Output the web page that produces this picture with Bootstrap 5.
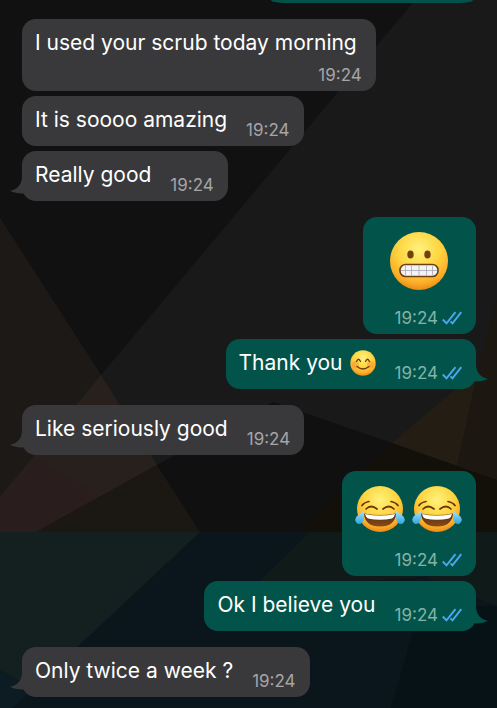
<!DOCTYPE html>
<html lang="en">
<head>
<meta charset="utf-8">
<meta name="viewport" content="width=device-width, initial-scale=1">
<title>Chat</title>
<link href="https://cdn.jsdelivr.net/npm/bootstrap@5.3.0/dist/css/bootstrap.min.css" rel="stylesheet">
<style>
body { background: #171717; color: #fff; font-family: Inter, "Liberation Sans", sans-serif; }
.chat { isolation: isolate; padding: 0 21px 11px 22px; }
.wallpaper { z-index: -1; }
.group { gap: 5px; }
.bubble { background: #39393b; border-radius: 14px; min-height: 50px; padding: 9px 14px 6px 13px; max-width: 90%; }
.bubble.inline { display: flex; gap: 14px; }
.bubble.sent { background: #02544a; }
.bubble.previous { min-height: 3px; width: 202px; padding: 0; margin-right: 3px; border-radius: 0 0 14px 14px / 0 0 3px 3px; }
.msg { font-size: 21px; line-height: 30px; padding-right: 5px; }
.msg.with-emoji { gap: 7px; }
.stamp { font-size: 17px; line-height: 20px; color: #a5a5a8; gap: 4px; }
.sent .stamp { color: #83b3a8; }
.below { margin-top: 7px; }
.ticks { width: 20px; height: 14px; }
.emoji-row { gap: 7px; padding: 6px 0 0; margin-bottom: 11px; }
.emoji-row.single { padding: 6px 14px 0; }
.emoji-sm { width: 26px; height: 26px; }
.emoji-md { width: 50px; height: 46px; }
.emoji-lg { width: 58px; height: 58px; }
.tail { position: absolute; bottom: 4px; width: 18px; height: 24px; fill: #39393b; }
.tail.left { left: -12px; }
.tail.right { right: -12px; fill: #02544a; transform: scaleX(-1); }
</style>
</head>
<body class="overflow-x-hidden">
<svg width="0" height="0" class="position-absolute" aria-hidden="true">
  <defs>
    <radialGradient id="face" cx=".5" cy=".3" r=".72"><stop offset="0" stop-color="#fff27c"/><stop offset=".5" stop-color="#fed541"/><stop offset=".8" stop-color="#fbb02a"/><stop offset="1" stop-color="#e98311"/></radialGradient>
    <linearGradient id="tear" x1="0" y1="0" x2="0" y2="1"><stop offset="0" stop-color="#a8e2fa"/><stop offset="1" stop-color="#2ba5e4"/></linearGradient>
    <linearGradient id="mouth" x1="0" y1="0" x2="0" y2="1"><stop offset="0" stop-color="#542a12"/><stop offset="1" stop-color="#8a4b16"/></linearGradient>
  </defs>
  <symbol id="tick-pair" viewBox="0 0 20 14"><path d="M.8 8.500 4.500 12.300 13.500 1.200M8.500 10.300 10.500 12.300 19.300 1.200" fill="none" stroke="#4ba8ef" stroke-width="1.900"/></symbol>
  <symbol id="tail-shape" viewBox="0 0 18 24"><path d="M12 3C12 11 8 16 0 18 5 20 10 21 18 20V3z"/></symbol>
  <symbol id="joy" viewBox="0 0 50 46">
    <circle cx="25" cy="23" r="23" fill="url(#face)"/>
    <path d="M7 19.500q2-3 7-4M43 19.500q-2-3-7-4M11 23q5-5 11 0M28 23q6-5 11 0" fill="none" stroke="#68350c" stroke-width="1.700" stroke-linecap="round"/>
    <path d="M9 27.500q16 3 32 0-1 13-16 13T9 27.500z" fill="url(#mouth)"/>
    <path d="M10 28q15 3 30 0-.5 3-3 4.500-12 2.500-24 0-2.500-1.500-3-4.500z" fill="#fff"/>
    <path d="M9 25q1 14-6 13-5-3-1-8zM41 25q-1 14 6 13 5-3 1-8z" fill="url(#tear)"/>
  </symbol>
  <symbol id="grimace" viewBox="0 0 58 58">
    <circle cx="29" cy="29" r="29" fill="url(#face)"/>
    <ellipse cx="20.500" cy="22.500" rx="3.200" ry="4" fill="#71420f"/><ellipse cx="37.500" cy="22.500" rx="3.200" ry="4" fill="#71420f"/>
    <rect x="10" y="32.500" width="38" height="12" rx="5.500" fill="#f4f4f6" stroke="#703e12" stroke-width="1.600"/>
    <path d="M11 38.500h36M15.500 33.500v10M21.500 33.500v10M29 33.500v10M36.500 33.500v10M42.500 33.500v10" stroke="#aeb0b6" stroke-width=".9"/>
  </symbol>
  <symbol id="blush" viewBox="0 0 26 26">
    <circle cx="13" cy="13" r="12.700" fill="url(#face)"/>
    <circle cx="5.500" cy="14.500" r="3.500" fill="#f57c2e" opacity=".4"/><circle cx="20.500" cy="14.500" r="3.500" fill="#f57c2e" opacity=".4"/>
    <path d="M6.500 11.500q2-4.500 4 0M15.500 11.500q2-4.500 4 0M7 16.500q6 5 12 0" fill="none" stroke="#743c0c" stroke-width="1.300" stroke-linecap="round"/>
  </symbol>
</svg>
<main class="chat position-relative min-vh-100 d-flex flex-column gap-3">
  <svg class="wallpaper position-absolute top-0 start-0 w-100 h-100" viewBox="0 0 497 708" preserveAspectRatio="none" aria-hidden="true">
    <path fill="#191919" d="M0 0h497v708H0z"/>
    <path fill="#111" d="M0 0h415L101 375 0 218z"/>
    <path fill="#1d1916" d="M0 218 101 375 200 532H0z"/>
    <path fill="#27201d" d="M101 375 157 465 36 532H0v-35z"/>
    <path fill="#2a1d1d" d="M34 457 100 496 36 532H0v-35z"/>
    <path fill="#1b1712" d="M157 465 200 532H36z"/>
    <path fill="#101010" d="M157 465 273 402 392 443 300 532H200z"/>
    <path fill="#231d14" d="M392 443 478 370 457 466z"/>
    <path fill="#1c1711" d="M497 300 478 370 457 466 497 480z"/>
    <path fill="#131009" d="M392 443 497 480V532H300z"/>
    <path fill="#0a161c" d="M0 532h497v176H0z"/>
    <path fill="#13201f" d="M0 532H200L12 708H0z"/>
    <path fill="#101a19" d="M310 532H497v74L425 577 250 590z"/>
    <path fill="#071217" d="M420 606h77v102H391z"/>
    <path fill="#0d1c22" d="M0 670 34 688 12 708H0z"/>
  </svg>
  <div class="bubble sent previous align-self-end"></div>

  <section class="group d-flex flex-column align-items-start">
    <div class="bubble d-flex flex-column"><span class="msg">I used your scrub today morning</span><time class="stamp below align-self-end">19:24</time></div>
    <div class="bubble inline"><span class="msg">It is soooo amazing</span><time class="stamp align-self-end">19:24</time></div>
    <div class="bubble inline position-relative"><svg class="tail left" aria-hidden="true"><use href="#tail-shape"/></svg><span class="msg">Really good</span><time class="stamp align-self-end">19:24</time></div>
  </section>

  <section class="group d-flex flex-column align-items-end">
    <div class="bubble sent d-flex flex-column">
      <div class="emoji-row single d-flex justify-content-center"><svg class="emoji-lg" role="img" aria-label="Grimacing face"><use href="#grimace"/></svg></div>
      <div class="stamp below d-flex align-items-center justify-content-end"><time>19:24</time><svg class="ticks" role="img" aria-label="Read"><use href="#tick-pair"/></svg></div>
    </div>
    <div class="bubble sent inline position-relative">
      <svg class="tail right" aria-hidden="true"><use href="#tail-shape"/></svg>
      <div class="msg with-emoji d-flex align-items-center align-self-start"><span>Thank you</span><svg class="emoji-sm" role="img" aria-label="Smiling face"><use href="#blush"/></svg></div>
      <div class="stamp d-flex align-items-center align-self-end"><time>19:24</time><svg class="ticks" role="img" aria-label="Read"><use href="#tick-pair"/></svg></div>
    </div>
  </section>

  <section class="group d-flex flex-column align-items-start">
    <div class="bubble inline position-relative"><svg class="tail left" aria-hidden="true"><use href="#tail-shape"/></svg><span class="msg">Like seriously good</span><time class="stamp align-self-end">19:24</time></div>
  </section>

  <section class="group d-flex flex-column align-items-end">
    <div class="bubble sent d-flex flex-column">
      <div class="emoji-row d-flex"><svg class="emoji-md" role="img" aria-label="Face with tears of joy"><use href="#joy"/></svg><svg class="emoji-md" role="img" aria-label="Face with tears of joy"><use href="#joy"/></svg></div>
      <div class="stamp below d-flex align-items-center justify-content-end"><time>19:24</time><svg class="ticks" role="img" aria-label="Read"><use href="#tick-pair"/></svg></div>
    </div>
    <div class="bubble sent inline position-relative">
      <svg class="tail right" aria-hidden="true"><use href="#tail-shape"/></svg>
      <span class="msg">Ok I believe you</span>
      <div class="stamp d-flex align-items-center align-self-end"><time>19:24</time><svg class="ticks" role="img" aria-label="Read"><use href="#tick-pair"/></svg></div>
    </div>
  </section>

  <section class="group d-flex flex-column align-items-start">
    <div class="bubble inline position-relative"><svg class="tail left" aria-hidden="true"><use href="#tail-shape"/></svg><span class="msg">Only twice a week ?</span><time class="stamp align-self-end">19:24</time></div>
  </section>
</main>
<script src="https://cdn.jsdelivr.net/npm/bootstrap@5.3.0/dist/js/bootstrap.bundle.min.js"></script>
</body>
</html>
